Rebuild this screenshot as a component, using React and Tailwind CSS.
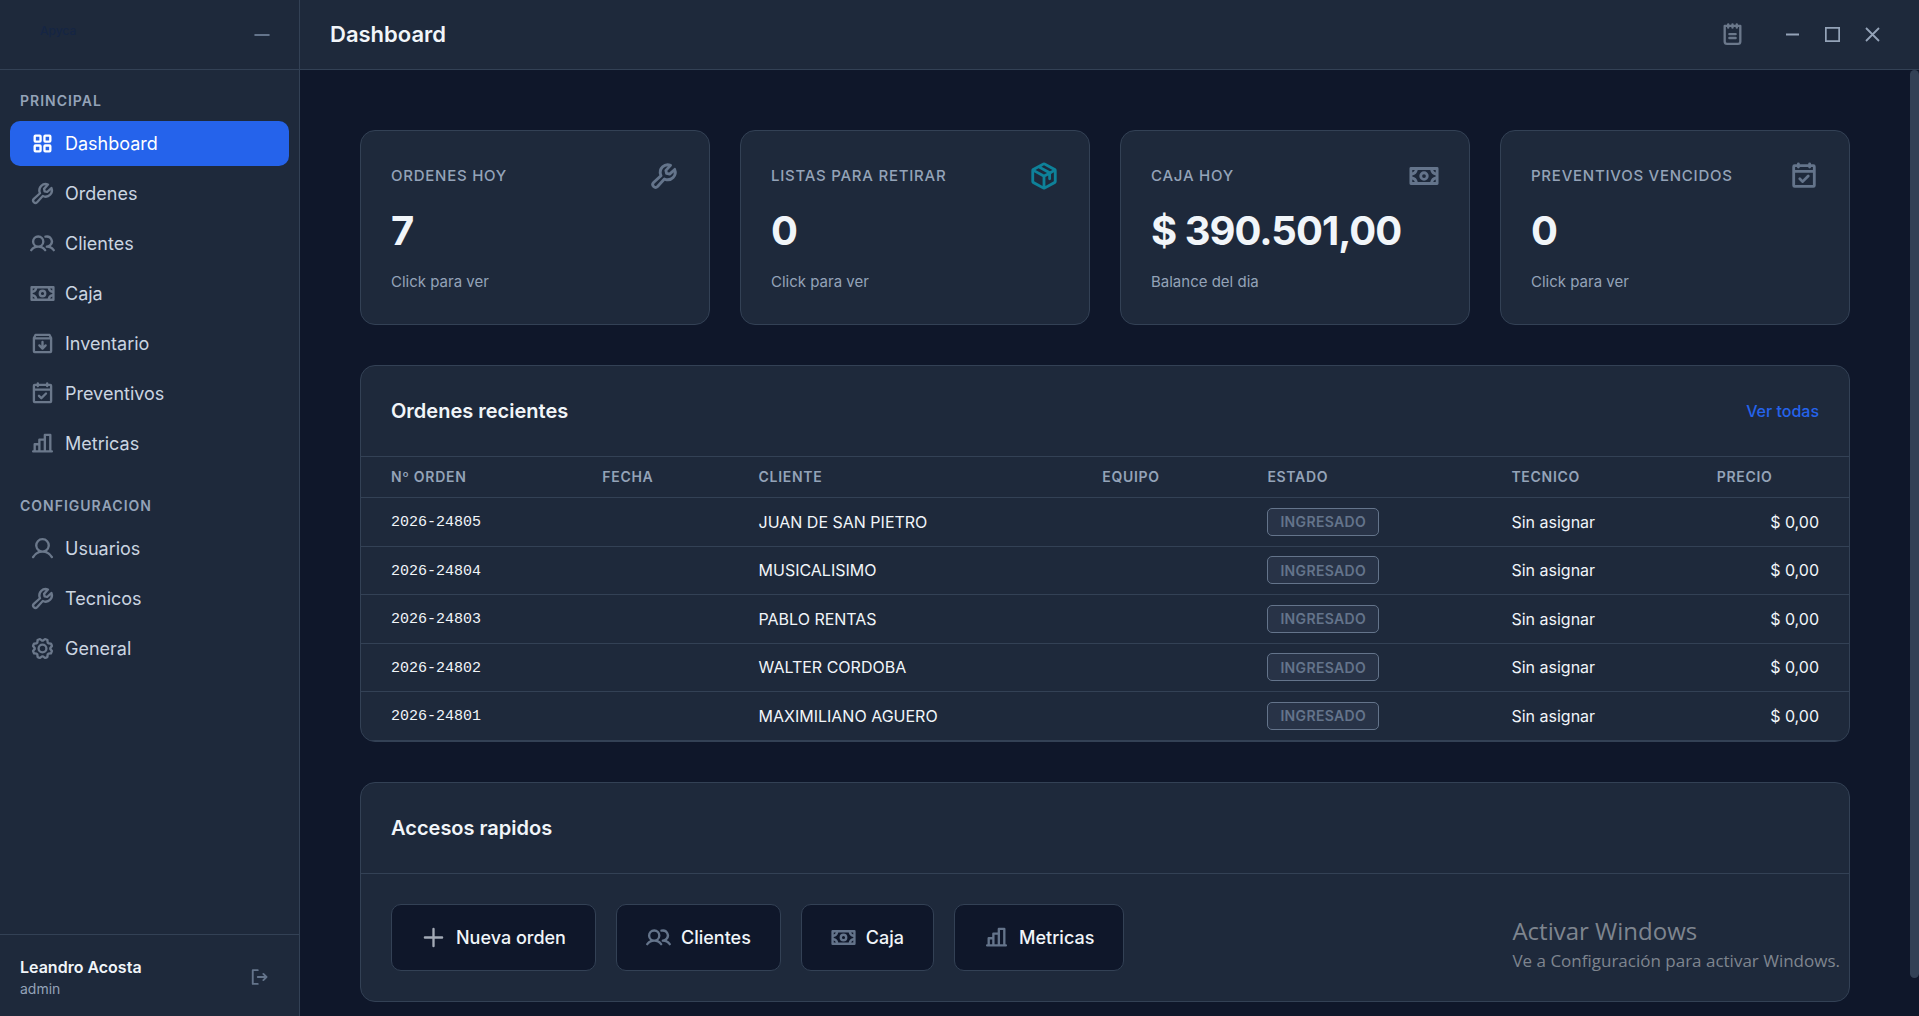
import {
  PiSquaresFourBold,
  PiWrenchBold,
  PiUsersBold,
  PiMoneyBold,
  PiBoxArrowDownBold,
  PiCalendarCheckBold,
  PiChartBarBold,
  PiUserBold,
  PiGearBold,
  PiSignOutBold,
  PiPackageBold,
  PiNotepadBold,
  PiPlusBold,
  PiMinusBold,
} from 'react-icons/pi';

const mainNav = [
  { label: 'Dashboard', icon: PiSquaresFourBold, active: true },
  { label: 'Ordenes', icon: PiWrenchBold },
  { label: 'Clientes', icon: PiUsersBold },
  { label: 'Caja', icon: PiMoneyBold },
  { label: 'Inventario', icon: PiBoxArrowDownBold },
  { label: 'Preventivos', icon: PiCalendarCheckBold },
  { label: 'Metricas', icon: PiChartBarBold },
];

const configNav = [
  { label: 'Usuarios', icon: PiUserBold },
  { label: 'Tecnicos', icon: PiWrenchBold },
  { label: 'General', icon: PiGearBold },
];

const stats = [
  { label: 'Ordenes hoy', value: '7', hint: 'Click para ver', icon: PiWrenchBold, color: 'text-[#64748b]' },
  { label: 'Listas para retirar', value: '0', hint: 'Click para ver', icon: PiPackageBold, color: 'text-[#0e8199]' },
  { label: 'Caja hoy', value: '$ 390.501,00', hint: 'Balance del dia', icon: PiMoneyBold, color: 'text-[#64748b]' },
  { label: 'Preventivos vencidos', value: '0', hint: 'Click para ver', icon: PiCalendarCheckBold, color: 'text-[#64748b]' },
];

const columns = [
  { label: 'Nº Orden', width: 'w-[14.2%]' },
  { label: 'Fecha', width: 'w-[10.5%]' },
  { label: 'Cliente', width: 'w-[23.1%]' },
  { label: 'Equipo', width: 'w-[11.1%]' },
  { label: 'Estado', width: 'w-[16.4%]' },
  { label: 'Tecnico', width: 'w-[13.8%]' },
  { label: 'Precio', width: 'w-[10.9%]' },
];

const orders = [
  { id: '2026-24805', client: 'JUAN DE SAN PIETRO' },
  { id: '2026-24804', client: 'MUSICALISIMO' },
  { id: '2026-24803', client: 'PABLO RENTAS' },
  { id: '2026-24802', client: 'WALTER CORDOBA' },
  { id: '2026-24801', client: 'MAXIMILIANO AGUERO' },
];

const shortcuts = [
  { label: 'Nueva orden', icon: PiPlusBold, color: 'text-[#a3aab6]' },
  { label: 'Clientes', icon: PiUsersBold, color: 'text-[#64748b]' },
  { label: 'Caja', icon: PiMoneyBold, color: 'text-[#64748b]' },
  { label: 'Metricas', icon: PiChartBarBold, color: 'text-[#64748b]' },
];

function NavGroup({ title, items }) {
  return (
    <div>
      <h2 className="mb-2.5 px-2.5 text-[14px] leading-5 font-semibold tracking-[1px] text-[#94a3b8] uppercase">
        {title}
      </h2>
      <ul className="flex flex-col gap-[5px]">
        {items.map(({ label, icon: Icon, active }) => (
          <li key={label}>
            <a
              href="#"
              className={`flex h-[45px] items-center gap-2.5 rounded-[10px] px-5 text-[18px] ${
                active ? 'bg-[#2563eb] text-white' : 'text-[#cbd5e1]'
              }`}
            >
              <Icon className={`size-[25px] ${active ? 'text-white' : 'text-[#6b788b]'}`} />
              {label}
            </a>
          </li>
        ))}
      </ul>
    </div>
  );
}

function Sidebar() {
  return (
    <aside className="flex w-[300px] shrink-0 flex-col border-r border-[#334155] bg-[#1e293b]">
      <div className="flex h-[70px] items-center justify-between border-b border-[#334155] pr-[27px] pl-10">
        <span className="pb-2 text-[12px] font-medium text-[#152544]">Apyca</span>
        <button type="button" aria-label="Contraer menu" className="text-[#64748b]">
          <PiMinusBold className="size-5" />
        </button>
      </div>

      <nav className="flex grow flex-col gap-[30px] px-2.5 pt-[21px]">
        <NavGroup title="Principal" items={mainNav} />
        <NavGroup title="Configuracion" items={configNav} />
      </nav>

      {/* Usuario */}
      <div className="flex h-[82px] items-center justify-between border-t border-[#334155] pt-0.5 pr-[30px] pl-5">
        <div>
          <p className="text-[16px] leading-6 font-semibold text-[#f1f5f9]">Leandro Acosta</p>
          <p className="text-[14px] leading-5 text-[#94a3b8]">admin</p>
        </div>
        <button type="button" aria-label="Cerrar sesion" className="text-[#64748b]">
          <PiSignOutBold className="size-5" />
        </button>
      </div>
    </aside>
  );
}

function TopBar() {
  return (
    <header className="flex h-[70px] shrink-0 items-center justify-between border-b border-[#334155] bg-[#1e293b] pr-[27px] pl-[30px]">
      <h1 className="text-[22px] font-semibold text-[#f1f5f9]">Dashboard</h1>
      <div className="flex items-center">
        <button type="button" aria-label="Notas" className="mr-[27px] text-[#6b788b]">
          <PiNotepadBold className="size-[25px]" />
        </button>
        {/* Controles de ventana */}
        <button type="button" aria-label="Minimizar" className="flex size-10 items-center justify-center text-[#94a3b8]">
          <svg className="size-[15px]" viewBox="0 0 15 15" stroke="currentColor" strokeWidth="2">
            <path d="M1 7.5h13" />
          </svg>
        </button>
        <button type="button" aria-label="Maximizar" className="flex size-10 items-center justify-center text-[#94a3b8]">
          <svg className="size-[15px]" viewBox="0 0 15 15" fill="none" stroke="currentColor" strokeWidth="1.7">
            <path d="M.85.85h13.3v13.3H.85z" />
          </svg>
        </button>
        <button type="button" aria-label="Cerrar" className="flex size-10 items-center justify-center text-[#94a3b8]">
          <svg className="size-[15px]" viewBox="0 0 15 15" stroke="currentColor" strokeWidth="1.8">
            <path d="M1 1l13 13M14 1L1 14" />
          </svg>
        </button>
      </div>
    </header>
  );
}

function StatCard({ label, value, hint, icon: Icon, color }) {
  return (
    <article className="rounded-[15px] border border-[#334155] bg-[#1e293b] p-[30px]">
      <div className="flex items-center justify-between">
        <h2 className="text-[15px] leading-[30px] font-medium tracking-wider text-[#94a3b8] uppercase">{label}</h2>
        <Icon className={`size-[30px] ${color}`} />
      </div>
      <p className="mt-[14px] text-[40px] leading-[52px] font-bold tracking-tight text-[#f1f5f9]">{value}</p>
      <p className="mt-[13px] text-[15px] leading-6 text-[#94a3b8]">{hint}</p>
    </article>
  );
}

function RecentOrders() {
  return (
    <section className="overflow-hidden rounded-[15px] border border-[#334155] bg-[#1e293b]">
      <div className="flex h-[91px] items-center justify-between border-b border-[#334155] px-[30px]">
        <h2 className="text-[20px] font-semibold text-[#f1f5f9]">Ordenes recientes</h2>
        <a href="#" className="text-[16px] font-medium text-[#2563eb]">
          Ver todas
        </a>
      </div>
      <table className="w-full table-fixed text-left">
        <thead>
          <tr className="h-10 border-b border-[#334155] text-[14px] text-[#94a3b8] uppercase">
            {columns.map(({ label, width }) => (
              <th key={label} scope="col" className={`${width} px-[30px] font-semibold tracking-wider whitespace-nowrap`}>
                {label}
              </th>
            ))}
          </tr>
        </thead>
        <tbody className="text-[16px] text-[#f1f5f9]">
          {orders.map(({ id, client }) => (
            <tr key={id} className="h-[49px] border-b border-[#334155] even:h-12">
              <td className="px-[30px] pt-1 font-['Liberation_Mono',monospace] text-[15px]">{id}</td>
              <td />
              <td className="px-[30px] whitespace-nowrap">{client}</td>
              <td />
              <td className="px-[30px]">
                <span className="inline-flex h-7 items-center rounded-[5px] border border-[#64748b] bg-[#64748b]/15 px-3 text-[14px] font-semibold tracking-wide text-[#64748b]">
                  INGRESADO
                </span>
              </td>
              <td className="px-[30px] whitespace-nowrap">Sin asignar</td>
              <td className="px-[30px] text-right whitespace-nowrap">$ 0,00</td>
            </tr>
          ))}
        </tbody>
      </table>
    </section>
  );
}

function Shortcuts() {
  return (
    <section className="rounded-[15px] border border-[#334155] bg-[#1e293b]">
      <div className="flex h-[91px] items-center border-b border-[#334155] px-[30px]">
        <h2 className="text-[20px] font-semibold text-[#f1f5f9]">Accesos rapidos</h2>
      </div>
      <div className="flex flex-wrap gap-5 p-[30px]">
        {shortcuts.map(({ label, icon: Icon, color }) => (
          <button
            key={label}
            type="button"
            className="flex h-[67px] items-center gap-2.5 rounded-[10px] border border-[#334155] bg-[#0f172a] px-[29px] text-[18px] font-medium text-[#f1f5f9]"
          >
            <Icon className={`size-[25px] ${color}`} />
            {label}
          </button>
        ))}
      </div>
    </section>
  );
}

export default function App() {
  return (
    <div className="relative flex h-screen overflow-hidden bg-[#0f172a] font-[Inter,sans-serif]">
      <Sidebar />
      <div className="flex min-w-0 grow flex-col">
        <TopBar />
        <div className="flex min-h-0 grow">
          <main className="flex min-w-0 grow flex-col gap-10 overflow-hidden p-[60px]">
            <div className="grid shrink-0 grid-cols-4 gap-[30px]">
              {stats.map((stat) => (
                <StatCard key={stat.label} {...stat} />
              ))}
            </div>
            <div className="shrink-0">
              <RecentOrders />
            </div>
            <div className="shrink-0">
              <Shortcuts />
            </div>
          </main>
          {/* Barra de desplazamiento */}
          <div className="w-[9px] shrink-0">
            <div className="h-[96%] rounded-full bg-[#334155]" />
          </div>
        </div>
      </div>

      {/* Aviso del sistema */}
      <div className="pointer-events-none absolute right-[79px] bottom-[41px] font-['Open_Sans',sans-serif] text-[#7e858f]">
        <p className="text-[24px] leading-8">Activar Windows</p>
        <p className="text-[17px] leading-7">Ve a Configuración para activar Windows.</p>
      </div>
    </div>
  );
}
